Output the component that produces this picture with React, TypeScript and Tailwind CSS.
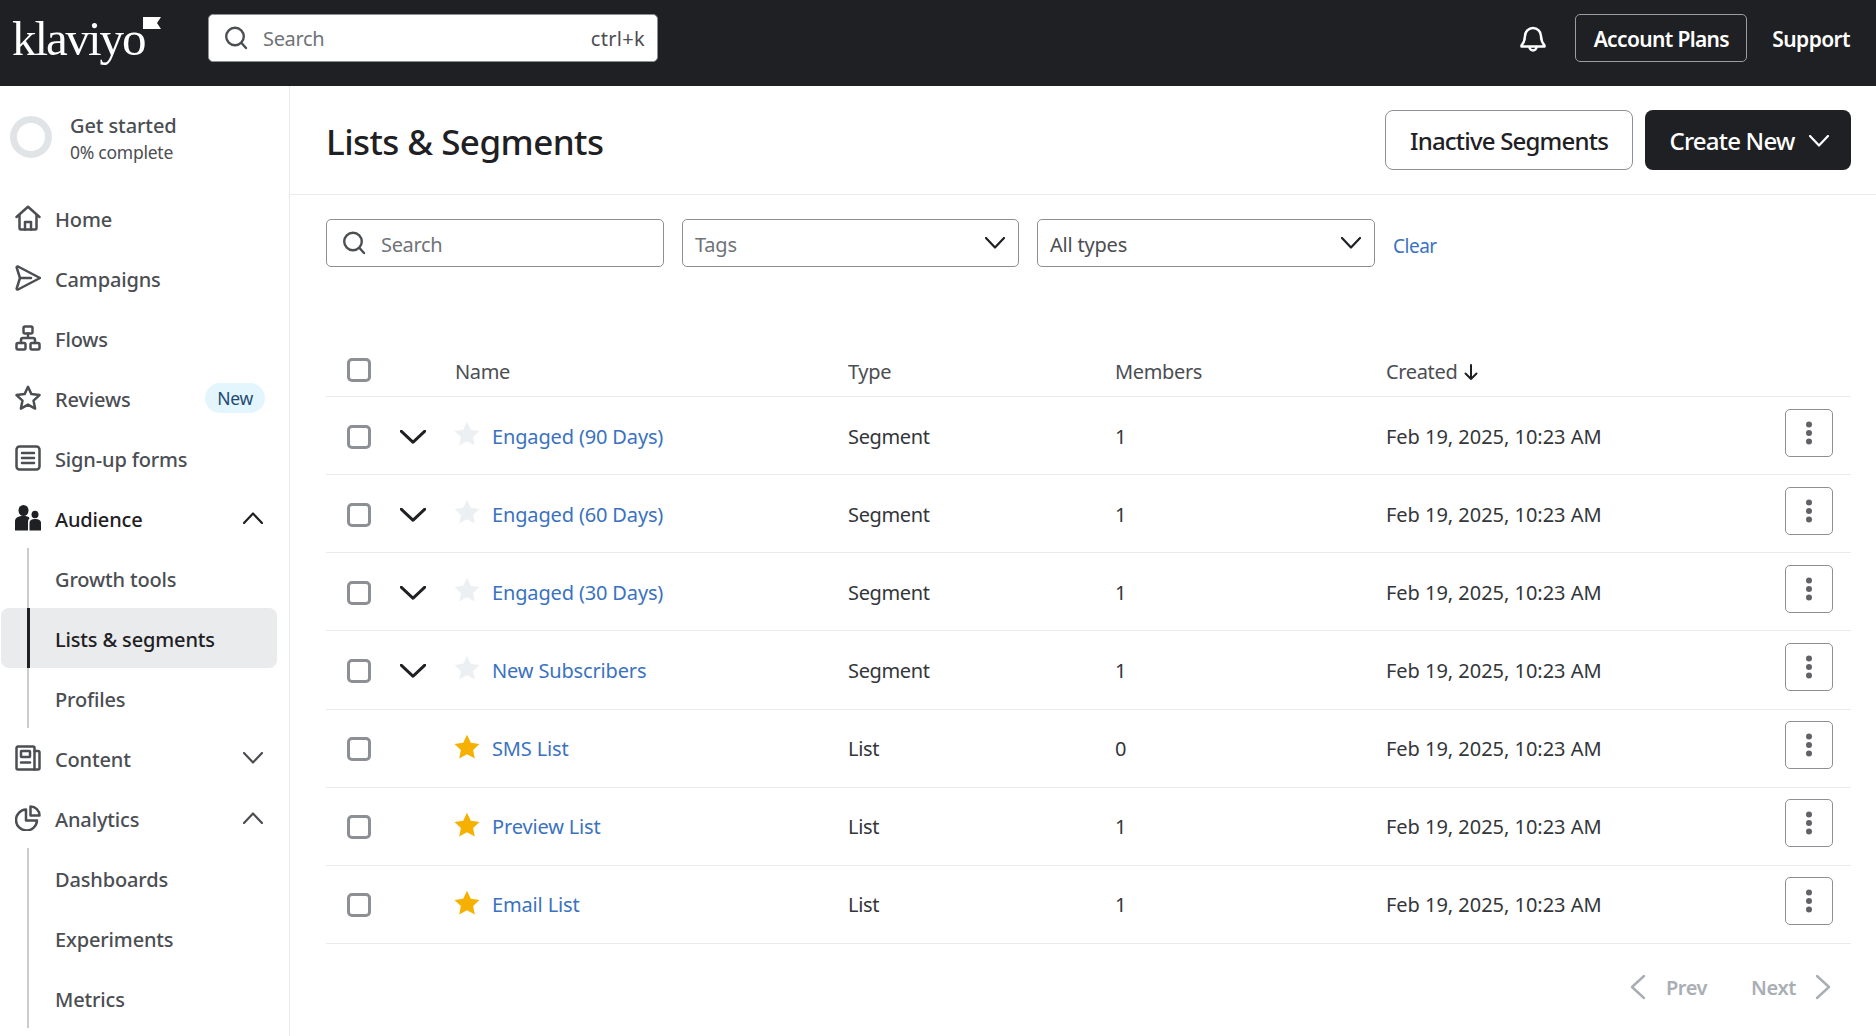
import React from "react";

const FONT = "font-['Noto_Sans','Open_Sans',sans-serif]";

function Ico({ className = "", size = 26, children, vb = 26, sw = 2.5 }: { className?: string; size?: number; children: React.ReactNode; vb?: number; sw?: number }) {
  return (
    <svg width={size} height={size} viewBox={`0 0 ${vb} ${vb}`} fill="none" stroke="currentColor" strokeWidth={sw} strokeLinecap="round" strokeLinejoin="round" className={`shrink-0 ${className}`}>
      {children}
    </svg>
  );
}

const HomeIcon = () => (
  <Ico>
    <path d="M1.500 12 13 1.800 24.500 12" />
    <path d="M4.500 10v13a1.500 1.500 0 0 0 1.500 1.500h14a1.500 1.500 0 0 0 1.500-1.500V10" />
    <path d="M10 24.500V17h6v7.500" />
  </Ico>
);
const SendIcon = () => (
  <Ico>
    <path d="M3 1.500 25 13 3 24.500a1 1 0 0 1-1.300-1.200L5 13 1.700 2.700A1 1 0 0 1 3 1.500Z" />
    <path d="M5 13h11" />
  </Ico>
);
const FlowsIcon = () => (
  <Ico>
    <rect x="8.500" y="1.500" width="9" height="7" rx="1.500" />
    <rect x="1.500" y="18" width="9" height="6.500" rx="1.500" />
    <rect x="15.500" y="18" width="9" height="6.500" rx="1.500" />
    <path d="M13 8.500V13M6 18v-3a2 2 0 0 1 2-2h10a2 2 0 0 1 2 2v3" />
  </Ico>
);
const StarOutline = () => (
  <Ico>
    <path d="m13 1.800 3.400 7.300 8.100 1-6 5.500 1.600 8-7.100-4-7.100 4 1.600-8-6-5.500 8.100-1Z" />
  </Ico>
);
const FormIcon = () => (
  <Ico>
    <rect x="1.500" y="1.500" width="23" height="23" rx="3" />
    <path d="M7 8h12M7 13h12M7 18h12" />
  </Ico>
);
const AudienceIcon = () => (
  <svg width="26" height="26" viewBox="0 0 26 26" fill="currentColor" className="shrink-0">
    <ellipse cx="8.500" cy="5.500" rx="5" ry="5.500" />
    <path d="M0 25.500v-9C0 12.500 3.500 11 8.500 11c3 0 5 .6 6 2-1 1.300-1.500 2.800-1.500 4.500v8Z" />
    <ellipse cx="20" cy="9.500" rx="3.500" ry="3.800" />
    <path d="M14.500 25.500V18c0-2.800 2-4 5.500-4s6 1.200 6 4v7.500Z" />
  </svg>
);
const ContentIcon = () => (
  <Ico>
    <path d="M19.500 24.500H3A1.500 1.500 0 0 1 1.500 23V3A1.500 1.500 0 0 1 3 1.500h15A1.500 1.500 0 0 1 19.500 3Z" />
    <path d="M19.500 6H23a1.500 1.500 0 0 1 1.500 1.500V23a1.500 1.500 0 0 1-1.500 1.500h-3.500" />
    <rect x="6" y="6" width="9" height="6" rx=".5" />
    <path d="M6 17.500h9" />
  </Ico>
);
const PieIcon = () => (
  <Ico>
    <path d="M11 4.500A10.500 10.500 0 1 0 22 15.500H11Z" />
    <path d="M15.500 1.500v9h9a9 9 0 0 0-9-9Z" />
  </Ico>
);
const Chevron = ({ up = false, className = "", w = 20, h = 12, sw = 2.2 }: { up?: boolean; className?: string; w?: number; h?: number; sw?: number }) => (
  <svg width={w} height={h} viewBox="0 0 20 12" fill="none" stroke="currentColor" strokeWidth={sw} strokeLinecap="round" strokeLinejoin="round" preserveAspectRatio="none" className={`shrink-0 ${className}`}>
    <path d={up ? "M1 11 10 1.500 19 11" : "M1 1 10 10.500 19 1"} />
  </svg>
);
const SearchIcon = () => (
  <svg width="24" height="24" viewBox="0 0 24 24" fill="none" stroke="currentColor" strokeWidth="2.400" strokeLinecap="round" className="shrink-0">
    <circle cx="11" cy="10.500" r="8.800" />
    <path d="m17.500 17 4.500 5" />
  </svg>
);
const StarFilled = ({ on }: { on: boolean }) => (
  <svg width="26" height="26" viewBox="0 0 26 26" className={`shrink-0 ${on ? "text-[#f5b000]" : "text-[#edf0f2]"}`} fill="currentColor">
    <path d="m13 .8 3.800 8 8.700 1.100-6.400 6 1.700 8.700-7.800-4.300-7.800 4.300 1.700-8.700-6.400-6 8.700-1.100Z" />
  </svg>
);

function NavRow({ icon, label, active = false, right }: { icon: React.ReactNode; label: string; active?: boolean; right?: React.ReactNode }) {
  return (
    <div className={`flex h-[60px] items-center pl-[15px] ${active ? "text-[#1e2023]" : "text-[#4b4e52]"}`}>
      <span className="flex w-[26px] items-center justify-center">{icon}</span>
      <span className="ml-[14px] pt-[3px] text-[20px] font-medium tracking-[-0.15px]">{label}</span>
      {right}
    </div>
  );
}

function SubRow({ label, active = false }: { label: string; active?: boolean }) {
  return (
    <div className={`mx-px flex h-[60px] w-[276px] pl-[26px] ${active ? "rounded-lg bg-[#e9ebed] text-[#1e2023]" : "text-[#4b4e52]"}`}>
      <div className={`flex h-full w-full items-center pt-[3px] text-[20px] font-medium tracking-[-0.15px] ${active ? "border-l-[3px] border-[#1e2023] pl-[25px]" : "border-l-2 border-[#c9cdd1] pl-[26px]"}`}>
        {label}
      </div>
    </div>
  );
}

const NavChevron = ({ up = false, dark = false }: { up?: boolean; dark?: boolean }) => (
  <span className={`ml-auto mr-[26px] flex ${dark ? "text-[#1e2023]" : "text-[#4b4e52]"}`}>
    <Chevron up={up} />
  </span>
);

function Sidebar() {
  return (
    <aside className="w-[290px] shrink-0 border-r border-[#e8eaec]">
      <div className="flex h-[102px] items-start pl-[10px] pt-[30px]">
        <div className="h-[42px] w-[42px] shrink-0 rounded-full border-[7px] border-[#e1e4e7]" />
        <div className="ml-[18px] -mt-[3px]">
          <div className="text-[20px] font-medium leading-[26px] tracking-[-0.1px] text-[#4b4e52]">Get started</div>
          <div className="pt-px text-[17.500px] leading-[24px] tracking-[-0.25px] text-[#4b4e52]">0% complete</div>
        </div>
      </div>
      <NavRow icon={<HomeIcon />} label="Home" />
      <NavRow icon={<SendIcon />} label="Campaigns" />
      <NavRow icon={<FlowsIcon />} label="Flows" />
      <NavRow
        icon={<StarOutline />}
        label="Reviews"
        right={<span className="ml-auto mr-[24px] flex h-[30px] w-[60px] items-center justify-center rounded-full bg-[#e3f6fd] text-[17.500px] tracking-[-0.3px] text-[#1f4a72]">New</span>}
      />
      <NavRow icon={<FormIcon />} label="Sign-up forms" />
      <NavRow icon={<AudienceIcon />} label="Audience" active right={<NavChevron up dark />} />
      <SubRow label="Growth tools" />
      <SubRow label="Lists & segments" active />
      <SubRow label="Profiles" />
      <NavRow icon={<ContentIcon />} label="Content" right={<NavChevron />} />
      <NavRow icon={<PieIcon />} label="Analytics" right={<NavChevron up />} />
      <SubRow label="Dashboards" />
      <SubRow label="Experiments" />
      <SubRow label="Metrics" />
    </aside>
  );
}

function TopBar() {
  return (
    <header className="flex h-[86px] shrink-0 items-center bg-[#1e2023] pb-[10px] pl-[12px] pr-[26px]">
      <div className="relative flex w-[196px] shrink-0 items-center">
        <span className="font-['Liberation_Serif',serif] text-[49px] leading-none tracking-[-2.100px] text-white">klaviyo</span>
        <svg width="18" height="13" viewBox="0 0 18 13" className="absolute left-[131px] top-[3px]" fill="#fff">
          <path d="M0 0h18l-4 6 4 6H0Z" />
        </svg>
      </div>
      <div className="flex h-[48px] w-[450px] items-center rounded-[5px] border border-[#8c8f93] bg-white pl-[15px] pr-[12px] text-[#4b4e52]">
        <SearchIcon />
        <span className="ml-[15px] pt-[2px] text-[20px] tracking-[-0.35px] text-[#6f7377]">Search</span>
        <span className="ml-auto pt-[2px] text-[20px] tracking-[0.3px]">ctrl+k</span>
      </div>
      <div className="ml-auto flex items-center text-white">
        <svg width="26" height="28" viewBox="0 0 26 28" fill="none" stroke="currentColor" strokeWidth="2.500" strokeLinejoin="round" strokeLinecap="round" className="shrink-0">
          <path d="M5 12a8 8 0 0 1 16 0c0 5 1.500 7 3.500 9.500v1H1.500v-1C3.500 19 5 17 5 12Z" />
          <path d="M9.500 23a3.500 3.500 0 0 0 7 0" />
        </svg>
        <button className="ml-[29px] flex h-[48px] w-[172px] items-center justify-center rounded-[5px] border border-[#9a9c9f] pt-[3px] text-[21px] font-semibold tracking-[-0.65px]">
          Account Plans
        </button>
        <span className="ml-[25px] pt-[3px] text-[21px] font-semibold tracking-[-0.6px]">Support</span>
      </div>
    </header>
  );
}

function FilterSelect({ label, muted = false, wide = false }: { label: string; muted?: boolean; wide?: boolean }) {
  return (
    <div className={`flex h-[48px] items-center rounded-[5px] border border-[#8c8f93] pl-[12px] pr-[13px] ${wide ? "w-[338px]" : "w-[337px]"}`}>
      <span className={`pt-[3px] text-[20px] tracking-[-0.2px] ${muted ? "text-[#6f7377]" : "text-[#4b4e52]"}`}>{label}</span>
      <Chevron className="ml-auto text-[#1e2023]" />
    </div>
  );
}

const Checkbox = () => <span className="block h-[24px] w-[24px] rounded-[5px] border-[3px] border-[#8c8f93]" />;

const COLS = "grid grid-cols-[74px_54px_38px_356px_267px_271px_399px_67px] items-center";

type Row = { name: string; type: string; members: string; fav: boolean; expand: boolean };
const rows: Row[] = [
  { name: "Engaged (90 Days)", type: "Segment", members: "1", fav: false, expand: true },
  { name: "Engaged (60 Days)", type: "Segment", members: "1", fav: false, expand: true },
  { name: "Engaged (30 Days)", type: "Segment", members: "1", fav: false, expand: true },
  { name: "New Subscribers", type: "Segment", members: "1", fav: false, expand: true },
  { name: "SMS List", type: "List", members: "0", fav: true, expand: false },
  { name: "Preview List", type: "List", members: "1", fav: true, expand: false },
  { name: "Email List", type: "List", members: "1", fav: true, expand: false },
];

function Table() {
  return (
    <div className="mt-[78px] text-[20px] tracking-[-0.35px]">
      <div className={`${COLS} h-[52px] border-b border-[#e8eaec] pb-[2px] text-[#4b4e52]`}>
        <span className="pl-[21px]"><Checkbox /></span>
        <span />
        <span className="col-span-2 pl-px pt-[5px]">Name</span>
        <span className="pt-[5px]">Type</span>
        <span className="pt-[5px]">Members</span>
        <span className="flex items-center gap-[6px] pt-[5px]">
          Created
          <svg width="16" height="18" viewBox="0 0 16 18" fill="none" stroke="#1e2023" strokeWidth="2" strokeLinecap="round" strokeLinejoin="round"><path d="M8 2v14M2.500 10.500 8 16l5.500-5.500" /></svg>
        </span>
        <span />
      </div>
      {rows.map((r) => (
        <div key={r.name} className={`${COLS} h-[78.140px] border-b border-[#e8eaec] text-[#33363a]`}>
          <span className="pl-[21px] pt-[2px]"><Checkbox /></span>
          <span className="pt-[2px] text-[#1e2023]">{r.expand && <Chevron w={26} h={14} sw={2.400} />}</span>
          <span className="-mt-[3px]"><StarFilled on={r.fav} /></span>
          <a className="pt-[2px] tracking-[-0.15px] text-[#3a72bf]">{r.name}</a>
          <span className="pt-[2px]">{r.type}</span>
          <span className="pt-[2px]">{r.members}</span>
          <span className="pt-[2px] tracking-[-0.03px]">Feb 19, 2025, 10:23 AM</span>
          <button className="-mt-[6px] flex h-[48px] w-[48px] items-center justify-center rounded-[5px] border border-[#8c8f93]">
            <svg width="6" height="24" viewBox="0 0 6 24" fill="#5f6266"><circle cx="3" cy="3.500" r="3" /><circle cx="3" cy="12" r="3" /><circle cx="3" cy="20.500" r="3" /></svg>
          </button>
        </div>
      ))}
    </div>
  );
}

function Main() {
  return (
    <main className="min-w-0 flex-1">
      <div className="flex h-[109px] items-center border-b border-[#e8eaec] pl-[36px] pr-[25px]">
        <h1 className="pt-[5px] text-[35px] font-medium tracking-[-0.55px] text-[#1e2023]">Lists &amp; Segments</h1>
        <button className="ml-auto flex h-[60px] w-[248px] items-center justify-center rounded-lg border border-[#8c8f93] pt-[1px] text-[24px] font-medium tracking-[-0.8px] text-[#1e2023]">
          Inactive Segments
        </button>
        <button className="ml-[12px] flex h-[60px] w-[206px] items-center justify-center gap-[15px] rounded-lg bg-[#1e2023] pl-[3px] pt-[1px] text-[24px] font-medium tracking-[-0.8px] text-white">
          Create New
          <Chevron />
        </button>
      </div>
      <div className="pl-[36px] pr-[25px]">
        <div className="mt-[24px] flex items-center gap-[18px]">
          <div className="flex h-[48px] w-[338px] items-center rounded-[5px] border border-[#8c8f93] pl-[15px] text-[#4b4e52]">
            <SearchIcon />
            <span className="ml-[15px] pt-[3px] text-[20px] tracking-[-0.35px] text-[#6f7377]">Search</span>
          </div>
          <FilterSelect label="Tags" muted />
          <FilterSelect label="All types" wide />
          <a className="pt-[7px] text-[19px] tracking-[-0.5px] text-[#3a72bf]">Clear</a>
        </div>
        <Table />
        <div className="mt-[27px] flex items-center justify-end pr-[20px] text-[20px] font-semibold tracking-[-0.4px] text-[#a9aeb4]">
          <svg width="16" height="26" viewBox="0 0 16 26" fill="none" stroke="currentColor" strokeWidth="2.400" strokeLinecap="round" strokeLinejoin="round"><path d="M14 2 2 13l12 11" /></svg>
          <span className="ml-[20px] pt-[2px]">Prev</span>
          <span className="ml-[44px] pt-[2px]">Next</span>
          <svg width="16" height="26" viewBox="0 0 16 26" fill="none" stroke="currentColor" strokeWidth="2.400" strokeLinecap="round" strokeLinejoin="round" className="ml-[19px]"><path d="m2 2 12 11L2 24" /></svg>
        </div>
      </div>
    </main>
  );
}

export default function App() {
  return (
    <div className={`flex h-[1036px] w-[1876px] flex-col overflow-hidden bg-white ${FONT}`}>
      <TopBar />
      <div className="flex min-h-0 flex-1">
        <Sidebar />
        <Main />
      </div>
    </div>
  );
}
